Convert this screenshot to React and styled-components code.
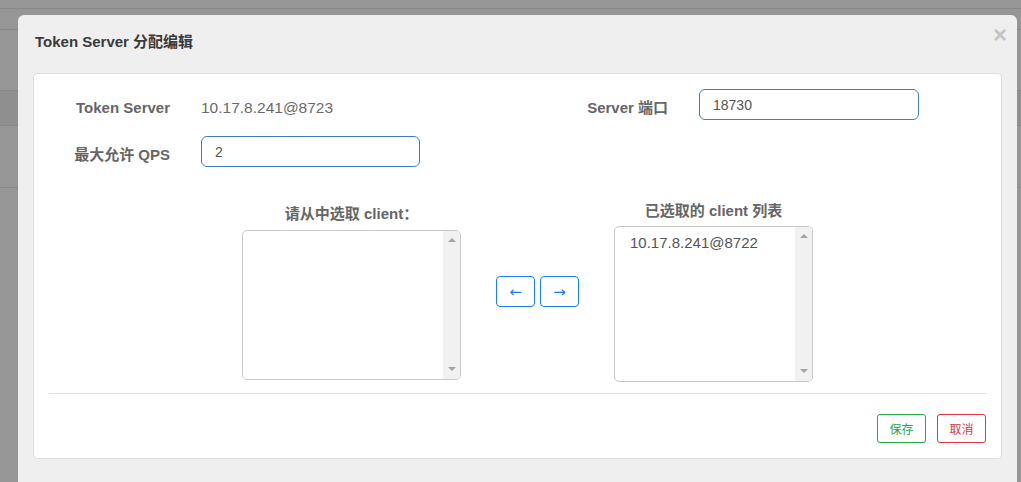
import React from "react";
import styled, { createGlobalStyle } from "styled-components";

const GlobalStyle = createGlobalStyle`
  html, body {
    margin: 0;
    padding: 0;
    width: 1021px;
    height: 482px;
    overflow: hidden;
  }
  body {
    font-family: "Liberation Sans", Arial, "Noto Sans CJK SC", sans-serif;
  }
`;

// BACKDROP
const Page = styled.div`
  position: relative;
  width: 1021px;
  height: 482px;
  background: #969696;
  overflow: hidden;
`;
const BgRow = styled.div`
  height: ${(p) => p.h}px;
  border-bottom: 1px solid #888;
  background: ${(p) => (p.dark ? "#8f8f8f" : "transparent")};
`;

// MODAL
const Modal = styled.div`
  position: absolute;
  left: 18px;
  top: 15px;
  width: 999px;
  bottom: -10px;
  background: #efefef;
  border-radius: 6px 6px 0 0;
`;
const Header = styled.div`
  display: flex;
  justify-content: space-between;
  align-items: flex-start;
  padding: 17px 10px 21px 17px;
`;
const Title = styled.h4`
  margin: 0;
  font-size: 15px;
  line-height: 20px;
  font-weight: 700;
  color: #3a3a3a;
`;
const Close = styled.span`
  font-family: "Liberation Sans", Arial, sans-serif;
  font-size: 24px;
  font-weight: 700;
  line-height: 20px;
  color: #c4c4c4;
  margin-top: -7px;
`;
const Card = styled.div`
  margin: 0 15px;
  background: #fff;
  border: 1px solid #ddd;
  border-radius: 4px;
  padding: 15px 0 15px;
`;

// FORM
const FormGrid = styled.div`
  display: grid;
  grid-template-columns: 136px 219px 217px 220px;
  column-gap: 31px;
  row-gap: 16px;
`;
const Label = styled.label`
  text-align: right;
  font-size: 15px;
  font-weight: 700;
  line-height: 18px;
  padding-top: 10px;
  color: #666;
`;
const Value = styled.div`
  font-size: 15.5px;
  line-height: 18px;
  padding-top: 10px;
  color: #6a6a6a;
`;
const Input = styled.input`
  box-sizing: border-box;
  width: 100%;
  height: 31px;
  border: 1px solid #3a7fc4;
  border-radius: 6px;
  padding: 0 13px;
  font-family: "Liberation Sans", Arial, sans-serif;
  font-size: 14px;
  color: #555;
  outline: none;
`;

// TRANSFER
const Transfer = styled.div`
  display: flex;
  align-items: center;
  justify-content: center;
  gap: 35px;
  padding-left: 20px;
  margin-top: 34px;
`;
const Column = styled.div`
  display: flex;
  flex-direction: column;
  align-items: center;
  gap: ${(p) => p.gap}px;
`;
const ColTitle = styled.div`
  font-size: 15px;
  font-weight: 700;
  line-height: 20px;
  color: #666;
`;
const ListBox = styled.div`
  box-sizing: border-box;
  width: ${(p) => p.w}px;
  height: ${(p) => p.h}px;
  border: 1px solid #c9c9c9;
  border-radius: 5px;
  display: flex;
  overflow: hidden;
`;
const Items = styled.div`
  flex: 1;
  padding: 7px 15px;
`;
const Item = styled.div`
  font-size: 15px;
  line-height: 18px;
  color: #555;
`;
const Scrollbar = styled.div`
  width: 17px;
  background: #f1f1f1;
  display: flex;
  flex-direction: column;
  justify-content: space-between;
  align-items: center;
  padding: 7px 0 8px;
`;
const Tri = styled.span`
  width: 0;
  height: 0;
  border-left: 4px solid transparent;
  border-right: 4px solid transparent;
  ${(p) =>
    p.up
      ? "border-bottom: 4px solid #a3a3a3;"
      : "border-top: 4px solid #a3a3a3;"}
`;
const MoveGroup = styled.div`
  display: flex;
  gap: 5px;
`;
const MoveBtn = styled.button`
  box-sizing: border-box;
  width: 39px;
  height: 31px;
  border: 1px solid #1a7df5;
  border-radius: 4px;
  background: #fff;
  color: #1a7df5;
  font-family: "DejaVu Sans", sans-serif;
  font-size: 15px;
  padding: 0;
`;

// FOOTER
const Divider = styled.hr`
  margin: 11px 14px 0 15px;
  border: 0;
  border-top: 1px solid #e3e3e3;
`;
const Footer = styled.div`
  display: flex;
  justify-content: flex-end;
  gap: 11px;
  padding: 20px 15px 0 0;
`;
const ActionBtn = styled.button`
  box-sizing: border-box;
  width: 49px;
  height: 29px;
  border: 1px solid ${(p) => p.color};
  border-radius: 3px;
  background: #fff;
  color: ${(p) => p.color};
  font-family: "Noto Sans CJK SC", sans-serif;
  font-size: 12px;
  padding: 0;
`;

function ScrollList({ w, h, items = [] }) {
  return (
    <ListBox w={w} h={h}>
      <Items>
        {items.map((it) => (
          <Item key={it}>{it}</Item>
        ))}
      </Items>
      <Scrollbar>
        <Tri up />
        <Tri />
      </Scrollbar>
    </ListBox>
  );
}

export default function App() {
  return (
    <Page>
      <GlobalStyle />
      <BgRow h={8} />
      <BgRow h={20} />
      <BgRow h={60} />
      <BgRow h={34} dark />
      <BgRow h={61} />

      <Modal>
        <Header>
          <Title>Token Server 分配编辑</Title>
          <Close>×</Close>
        </Header>
        <Card>
          <FormGrid>
            <Label>Token Server</Label>
            <Value>10.17.8.241@8723</Value>
            <Label>Server 端口</Label>
            <Input defaultValue="18730" />
            <Label>最大允许 QPS</Label>
            <Input defaultValue="2" />
          </FormGrid>

          <Transfer>
            <Column gap={6}>
              <ColTitle>请从中选取 client：</ColTitle>
              <ScrollList w={219} h={150} />
            </Column>
            <MoveGroup>
              <MoveBtn>←</MoveBtn>
              <MoveBtn>→</MoveBtn>
            </MoveGroup>
            <Column gap={5}>
              <ColTitle>已选取的 client 列表</ColTitle>
              <ScrollList w={199} h={156} items={["10.17.8.241@8722"]} />
            </Column>
          </Transfer>

          <Divider />
          <Footer>
            <ActionBtn color="#28a745">保存</ActionBtn>
            <ActionBtn color="#dc3545">取消</ActionBtn>
          </Footer>
        </Card>
      </Modal>
    </Page>
  );
}
